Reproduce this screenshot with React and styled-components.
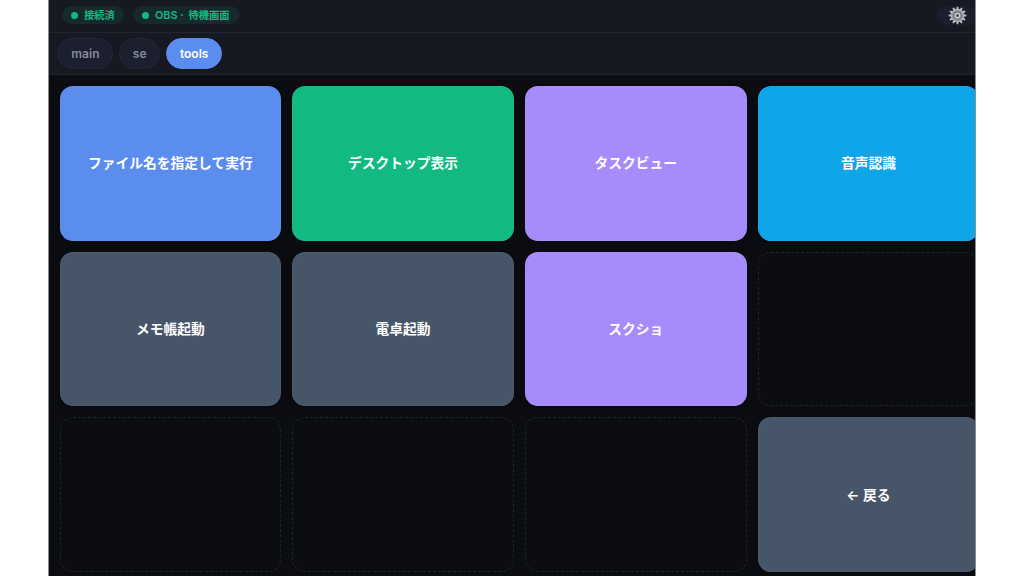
import React from 'react';
import styled, { createGlobalStyle } from 'styled-components';

const GlobalStyle = createGlobalStyle`
  * {
    box-sizing: border-box;
  }
  body {
    margin: 0;
    background: #fff;
    overflow: hidden;
    font-family: Inter, "Noto Sans CJK JP", sans-serif;
  }
  button {
    font-family: inherit;
    margin: 0;
  }
`

const Deck = styled.div`
  width: 928px;
  height: 576px;
  margin-left: 48px;
  background: #0b0d12;
  border: solid #8b8c90;
  border-width: 0 1px;
  overflow: hidden;
`

const StatusBar = styled.header`
  display: flex;
  align-items: center;
  gap: 9.5px;
  height: 32.5px;
  padding: 0 0 1px 13px;
  background: #161822;
  border-bottom: 1px solid #232631;
`

const StatusPill = styled.div`
  display: flex;
  align-items: center;
  gap: 6px;
  width: ${props => props.width}px;
  height: 18px;
  padding-left: 8.5px;
  border-radius: 9px;
  background: #162a2d;
  color: #12b981;
  font-size: 10.3px;
  font-weight: 600;
  line-height: 18px;
  white-space: nowrap;
`

const Source = styled.span`
  margin-right: 2px;
  font-size: 10.9px;
  white-space: pre;
`

const Dot = styled.span`
  flex: none;
  width: 7.4px;
  height: 7.4px;
  border-radius: 50%;
  background: #12b981;
`

const SettingsButton = styled.button`
  display: flex;
  align-items: center;
  justify-content: center;
  flex: none;
  width: 40px;
  height: 18.5px;
  margin: 0 -2px 0 auto;
  padding: 0;
  border: 0;
  border-radius: 9.5px;
  background: #1b1e2d;
`

const TabBar = styled.nav`
  display: flex;
  align-items: center;
  gap: 5.5px;
  height: 42.5px;
  padding-left: 8.4px;
  background: #161822;
  border-bottom: 1px solid #232631;
`

const Tab = styled.button`
  width: ${props => props.width}px;
  height: 31px;
  padding: 0;
  border: 1px solid ${props => props.$active ? '#5b8def' : '#242738'};
  border-radius: 16px;
  background: ${props => props.$active ? '#5b8def' : '#1c1f2e'};
  color: ${props => props.$active ? '#fff' : '#878b9c'};
  font-size: 12px;
  font-weight: 600;
`

const Grid = styled.main`
  display: grid;
  grid-template-columns: repeat(4, 221.7px);
  grid-auto-rows: 154.8px;
  gap: 11px;
  padding: 10.8px 10.5px;
`

const Key = styled.button`
  padding: 0;
  border: 1px solid rgba(255, 255, 255, 0.04);
  border-radius: 13px;
  background: ${props => props.color};
  box-shadow: 0 2px 7px rgba(0, 0, 0, 0.4);
  color: #fff;
  font-size: 13.75px;
  font-weight: 600;
  line-height: 18px;
  white-space: nowrap;
`

const EmptyKey = styled.div`
  border: 1px dashed #20232a;
  border-radius: 13px;
`

const teeth = Array.from({ length: 12 }, (_, i) => i * 30)

const GearIcon = () => (
  <svg width="19" height="19" viewBox="0 0 20 20">
    {teeth.map(angle => (
      <path
        key={angle}
        d="M8.7 4 L9.2 .7 H10.8 L11.3 4 Z"
        fill="#bfc3c7"
        transform={`rotate(${angle} 10 10)`}
      />
    ))}
    <circle cx="10" cy="10" r="6.4" fill="#7d838a" stroke="#b0b4b9" strokeWidth="1.5" />
    <circle cx="10" cy="10" r="2.3" fill="#4a4f5a" stroke="#d3d6d9" strokeWidth="1.3" />
  </svg>
)

const statuses = [
  { label: '接続済', width: 61.5 },
  { source: 'OBS · ', label: '待機画面', width: 105.5 },
]

const tabs = [
  { name: 'main', width: 56 },
  { name: 'se', width: 41.5 },
  { name: 'tools', width: 56.5 },
]

// null is an unassigned slot
const keys = [
  { label: 'ファイル名を指定して実行', color: '#5b8def' },
  { label: 'デスクトップ表示', color: '#12b981' },
  { label: 'タスクビュー', color: '#a78bfa' },
  { label: '音声認識', color: '#0fa5e9' },
  { label: 'メモ帳起動', color: '#475569' },
  { label: '電卓起動', color: '#475569' },
  { label: 'スクショ', color: '#a78bfa' },
  null,
  null,
  null,
  null,
  { label: '← 戻る', color: '#475569' },
]

const App = () => (
  <>
    <GlobalStyle />
    <Deck lang="ja">
      <StatusBar>
        {statuses.map(status => (
          <StatusPill key={status.label} width={status.width}>
            <Dot />
            <span>
              {status.source ? <Source>{status.source}</Source> : null}
              {status.label}
            </span>
          </StatusPill>
        ))}
        <SettingsButton aria-label="settings">
          <GearIcon />
        </SettingsButton>
      </StatusBar>
      <TabBar>
        {tabs.map(tab => (
          <Tab key={tab.name} width={tab.width} $active={tab.name === 'tools'}>
            {tab.name}
          </Tab>
        ))}
      </TabBar>
      <Grid>
        {keys.map((key, i) => (
          key ? <Key key={i} color={key.color}>{key.label}</Key> : <EmptyKey key={i} />
        ))}
      </Grid>
    </Deck>
  </>
)

export default App
